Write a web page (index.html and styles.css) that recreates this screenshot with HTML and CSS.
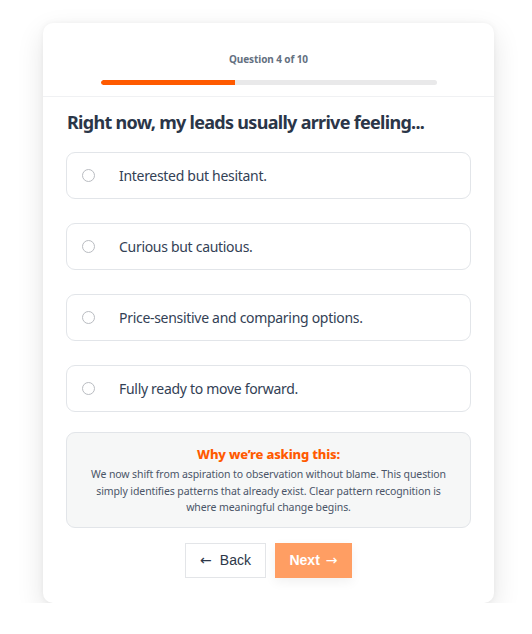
FILE: index.html
```html
<!DOCTYPE html>
<html>
<head>
<meta charset="utf-8">
<link rel="stylesheet" href="styles.css">
</head>
<body>
<div class="page">
  <div class="card">
    <div class="header">
      <div class="counter">Question 4 of 10</div>
      <div class="progress"><div class="progress-fill" style="width:40%"></div></div>
    </div>
    <div class="content">
      <h2 class="title">Right now, my leads usually arrive feeling...</h2>
      <div class="options">
        <label class="option"><span class="radio"></span><span class="option-text">Interested but hesitant.</span></label>
        <label class="option"><span class="radio"></span><span class="option-text">Curious but cautious.</span></label>
        <label class="option"><span class="radio"></span><span class="option-text">Price-sensitive and comparing options.</span></label>
        <label class="option"><span class="radio"></span><span class="option-text">Fully ready to move forward.</span></label>
      </div>
      <div class="info">
        <div class="info-title">Why we’re asking this:</div>
        <p class="info-text">We now shift from aspiration to observation without blame. This question simply identifies patterns that already exist. Clear pattern recognition is where meaningful change begins.</p>
      </div>
      <div class="actions">
        <button class="btn btn-back"><span class="arrow arrow-left">←</span>Back</button>
        <button class="btn btn-next">Next<span class="arrow arrow-right">→</span></button>
      </div>
    </div>
  </div>
</div>
</body>
</html>
```
FILE: styles.css
```css
* { box-sizing: border-box; }
html, body { margin: 0; padding: 0; background: #ffffff; }
body { font-family: "Noto Sans", "Open Sans", sans-serif; color: #2d3748; }
.page { padding: 23px 0 0 43px; }
.card {
  width: 451px;
  background: #fff;
  border-radius: 10px;
  box-shadow: 0 10px 28px rgba(0,0,0,0.11), 0 0 6px rgba(0,0,0,0.05);
}
.header {
  padding: 29px 0 11px;
  border-bottom: 1px solid #f0f1f3;
  display: flex;
  flex-direction: column;
  align-items: center;
}
.counter {
  font-size: 10px;
  line-height: 14px;
  font-weight: 700;
  color: #64707f;
  letter-spacing: -0.1px;
}
.progress {
  margin-top: 14px;
  width: 336px;
  height: 5px;
  background: #e9e9ea;
  border-radius: 3px;
  overflow: hidden;
}
.progress-fill { height: 100%; background: #ff5a00; border-radius: 3px 0 0 3px; }
.content { padding: 13px 23px 25px; }
.title {
  margin: 0 0 18px 1px;
  font-size: 18px;
  line-height: 24px;
  font-weight: 700;
  color: #2b3648;
  letter-spacing: -0.7px;
}
.options { display: flex; flex-direction: column; gap: 24px; }
.option {
  display: flex;
  align-items: center;
  height: 47px;
  padding: 0 15px;
  border: 1px solid #e2e5e9;
  border-radius: 9px;
  background: #fff;
}
.radio {
  width: 13px;
  height: 13px;
  border: 1px solid #b9bcc1;
  border-radius: 50%;
  flex: none;
}
.option-text {
  margin-left: 24px;
  font-size: 14px;
  color: #334155;
  letter-spacing: -0.3px;
}
.info {
  margin-top: 20px;
  background: #f6f7f7;
  border: 1px solid #e2e5e9;
  border-radius: 9px;
  padding: 12px 14px 11px;
  text-align: center;
}
.info-title {
  font-size: 13px;
  line-height: 18px;
  font-weight: 800;
  color: #ff5a00;
  letter-spacing: -0.2px;
}
.info-text {
  margin: 3px 0 0;
  font-size: 10.5px;
  line-height: 16.5px;
  color: #4a5568;
  letter-spacing: -0.1px;
}
.actions {
  margin-top: 15px;
  display: flex;
  justify-content: center;
  gap: 9px;
}
.btn {
  font-family: "Liberation Sans", Arial, sans-serif;
  font-size: 14px;
  height: 35px;
  border-radius: 0;
  cursor: pointer;
  padding: 0;
  display: flex;
  align-items: center;
  justify-content: center;
}
.arrow {
  font-family: "DejaVu Sans", sans-serif;
  font-weight: 400;
  font-size: 14px;
}
.arrow-left { margin-right: 8px; }
.arrow-right { margin-left: 6px; }
.btn-back {
  width: 81px;
  background: #fff;
  border: 1px solid #e3e5e8;
  color: #2d3748;
}
.btn-next {
  width: 77px;
  background: #ff9e63;
  border: none;
  color: #fff;
  font-weight: 700;
  box-shadow: 0 4px 12px rgba(0,0,0,0.06);
}
```
